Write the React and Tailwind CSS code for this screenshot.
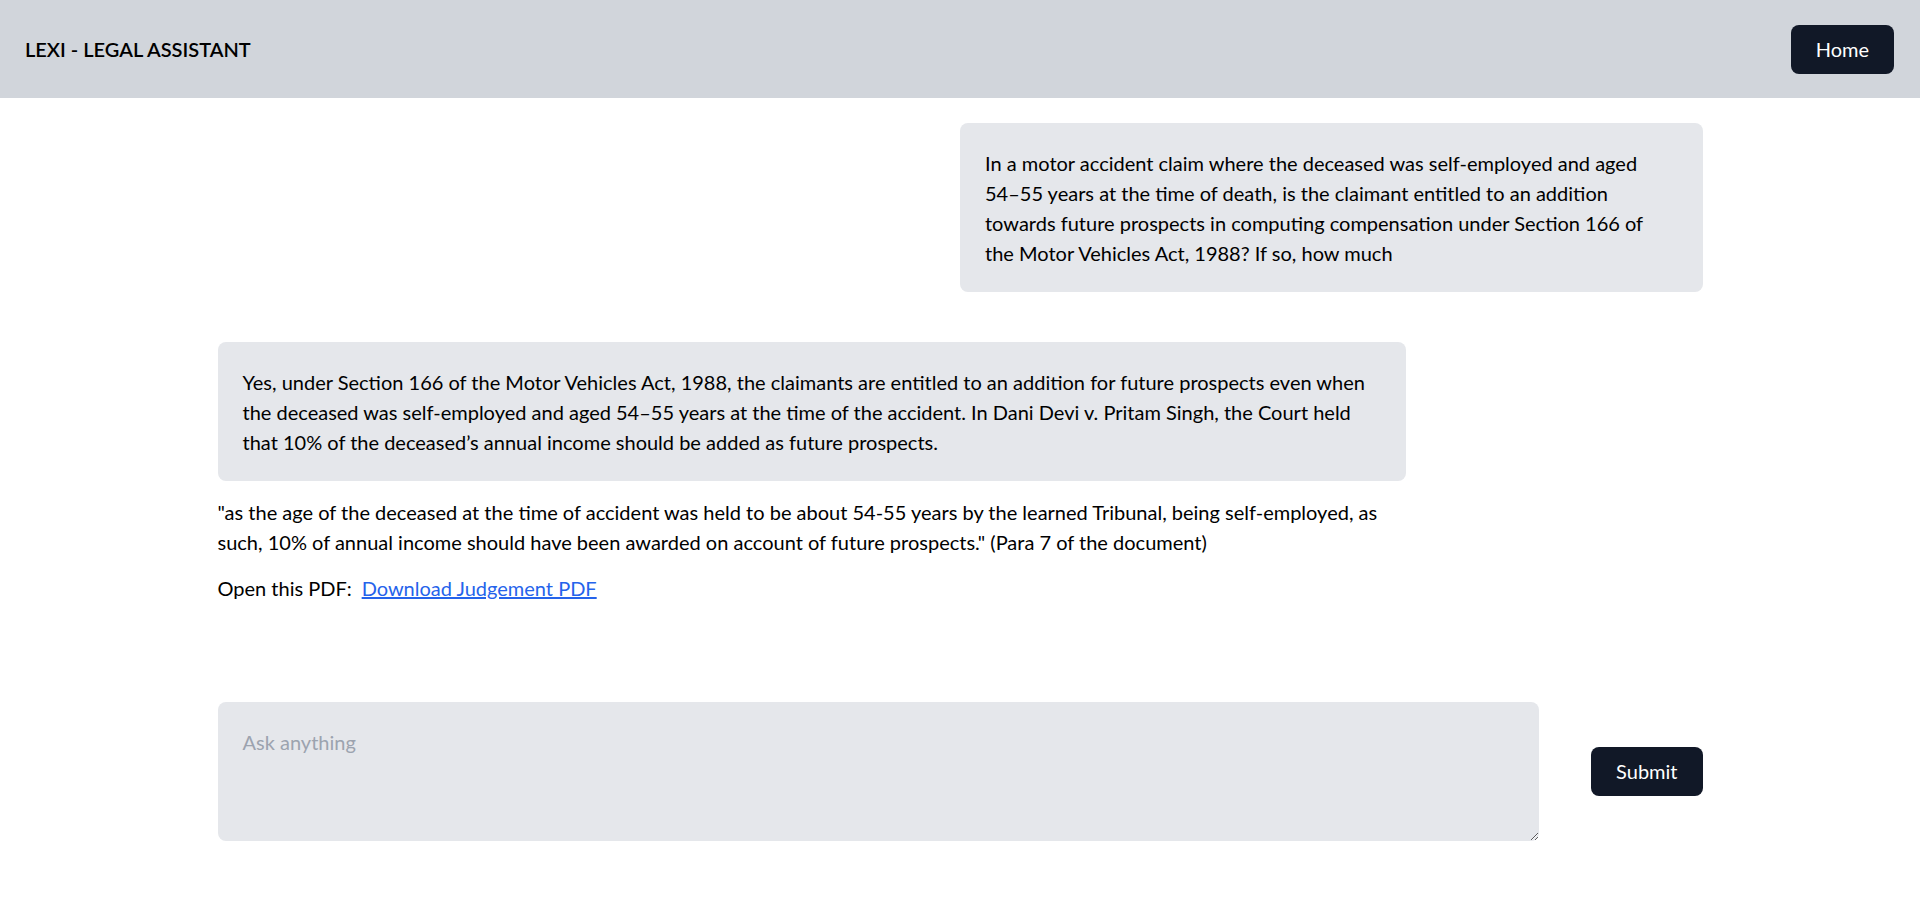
export default function App() {
  return (
    <div className="min-h-screen bg-white text-black text-[20px] leading-[30px]" style={{ fontFamily: "Lato, 'Liberation Sans', sans-serif" }}>
      <header className="h-[98px] bg-[#d1d5db] flex items-center justify-between pl-[25px] pr-[26px]">
        <h1 className="font-semibold text-[20px] text-black">LEXI - LEGAL ASSISTANT</h1>
        <button className="bg-[#111827] text-white rounded-[8px] px-[25px] py-[10px] leading-[29px]">Home</button>
      </header>

      <main className="w-[1485px] mx-auto pt-[25px]">
        <div className="flex justify-end">
          <div className="w-1/2 bg-[#e5e7eb] rounded-[8px] p-[25px] pb-[24px]">
            In a motor accident claim where the deceased was self-employed and aged
            <br />
            54–55 years at the time of death, is the claimant entitled to an addition
            <br />
            towards future prospects in computing compensation under Section 166 of
            <br />
            the Motor Vehicles Act, 1988? If so, how much
          </div>
        </div>

        <div className="mt-[50px] w-4/5">
          <div className="bg-[#e5e7eb] rounded-[8px] p-[25px] pb-[24px]">
            Yes, under Section 166 of the Motor Vehicles Act, 1988, the claimants are entitled to an addition for future prospects even when the deceased was self-employed and aged 54–55 years at the time of the accident. In Dani Devi v. Pritam Singh, the Court held that 10% of the deceased’s annual income should be added as future prospects.
          </div>
          <p className="mt-[16px]">
            "as the age of the deceased at the time of accident was held to be about 54-55 years by the learned Tribunal, being self-employed, as such, 10% of annual income should have been awarded on account of future prospects." (Para 7 of the document)
          </p>
          <p className="mt-[16px]">
            Open this PDF:
            <a href="#" className="ml-[10px] text-[#2563eb] underline">Download Judgement PDF</a>
          </p>
        </div>

        <div className="mt-[99px] flex items-center gap-[52px]">
          <textarea
            className="flex-1 h-[139px] bg-[#e5e7eb] rounded-[8px] p-[25px] outline-none placeholder:text-[#9ca3af] leading-[30px]"
            placeholder="Ask anything"
          />
          <button className="bg-[#111827] text-white rounded-[8px] px-[25px] py-[10px] leading-[29px]">Submit</button>
        </div>
      </main>
    </div>
  );
}
